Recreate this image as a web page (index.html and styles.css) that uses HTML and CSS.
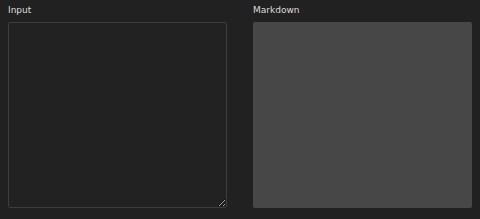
FILE: index.html
```html
<!DOCTYPE html>
<html lang="en">
<head>
    <meta charset="UTF-8">
    <meta name="viewport" content="width=device-width, initial-scale=1.0">
    <title>Markdown</title>
    <link rel="stylesheet" href="styles.css">
</head>
<body>
    <div class="panes">
        <div class="pane">
            <label class="pane-label" for="input">Input</label>
            <textarea id="input" class="input-box"></textarea>
        </div>
        <div class="pane">
            <div class="pane-label">Markdown</div>
            <div class="output-box" id="output"></div>
        </div>
    </div>
</body>
</html>
```

FILE: styles.css
```css
html, body {
    margin: 0;
    height: 100%;
}
body {
    font-family: 'DejaVu Sans', 'Noto Sans', sans-serif;
    background-color: #212121;
    color: #dddddd;
    padding: 4px 8px;
    box-sizing: border-box;
}
.panes {
    display: flex;
    gap: 26px;
}
.pane {
    flex: 1;
    display: flex;
    flex-direction: column;
}
.pane-label {
    font-size: 9px;
    line-height: 12px;
    margin-bottom: 6px;
}
.input-box {
    height: 186px;
    box-sizing: border-box;
    margin: 0;
    background: #222222;
    border: 1px solid #3d3d3d;
    border-radius: 2px;
    color: #dddddd;
    resize: both;
    outline: none;
}
.output-box {
    height: 186px;
    background: #474747;
    border-radius: 2px;
}
```
